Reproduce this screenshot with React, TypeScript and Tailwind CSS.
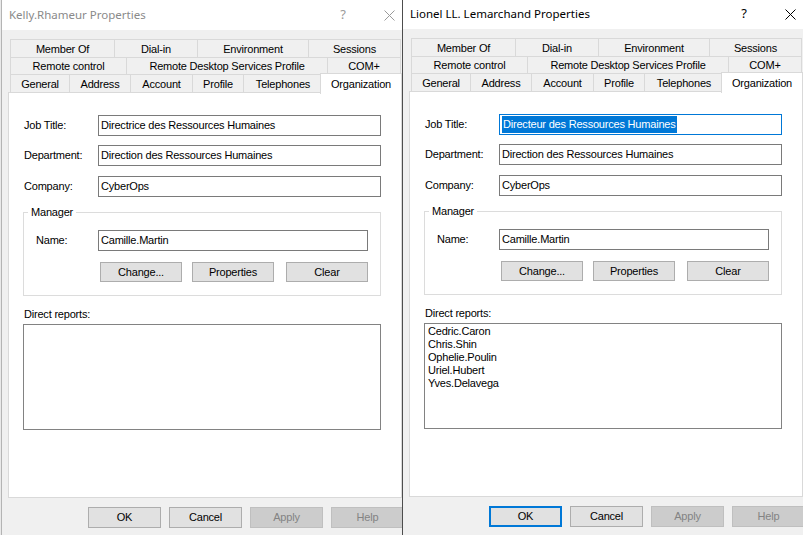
import React from 'react';

const ui = "font-['Liberation_Sans',Arial,sans-serif] text-[11px] tracking-[-0.2px] text-black";

const tabRows = [
  [
    { label: 'Member Of', w: 'w-[105px]' },
    { label: 'Dial-in', w: 'w-[84px]' },
    { label: 'Environment', w: 'w-[112px]' },
    { label: 'Sessions', w: 'w-[93px]' },
  ],
  [
    { label: 'Remote control', w: 'w-[117px]' },
    { label: 'Remote Desktop Services Profile', w: 'w-[202px]' },
    { label: 'COM+', w: 'w-[74px]' },
  ],
  [
    { label: 'General', w: 'w-[60px]' },
    { label: 'Address', w: 'w-[62px]' },
    { label: 'Account', w: 'w-[63px]' },
    { label: 'Profile', w: 'w-[52px]' },
    { label: 'Telephones', w: 'w-[80px]' },
  ],
];

function Field({ label, value, selected }: { label: string; value: string; selected?: boolean }) {
  return (
    <div className="flex items-center h-[21px]">
      <span className="w-[74px]">{label}</span>
      <div
        className={`w-[283px] h-[21px] flex items-center pl-[2px] bg-white border ${
          selected ? 'border-[#0078d7]' : 'border-[#7a7a7a]'
        }`}
      >
        {selected ? (
          <span className="bg-[#0078d7] text-white leading-[17px] px-px">{value}</span>
        ) : (
          <span>{value}</span>
        )}
      </div>
    </div>
  );
}

function Btn({ children, className = '', disabled, primary }: any) {
  return (
    <div
      className={`flex items-center justify-center ${
        disabled
          ? 'bg-[#cccccc] border border-[#bfbfbf] text-[#838383]'
          : primary
          ? 'bg-[#e1e1e1] border-2 border-[#0078d7]'
          : 'bg-[#e1e1e1] border border-[#adadad]'
      } ${className}`}
    >
      {children}
    </div>
  );
}

function Dialog({ title, active, reports }: { title: string; active?: boolean; reports: string[] }) {
  return (
    <div
      className={`w-[411px] h-[540px] bg-[#f0f0f0] border-l ${
        active ? 'border-[#4d4d4d]' : 'border-[#b4b4b4]'
      } ${ui}`}
    >
      {/* Title bar */}
      <div className="h-[30px] bg-white flex items-center pl-[7px]">
        <span
          className={`flex-1 font-['Noto_Sans',sans-serif] text-[11.5px] tracking-normal ${
            active ? 'text-black' : 'text-[#8a8a8a]'
          }`}
        >
          {title}
        </span>
        <span
          className={`w-[46px] text-center font-['Noto_Sans',sans-serif] text-[13px] tracking-normal ${
            active ? 'text-black' : 'text-[#9a9a9a]'
          }`}
        >
          ?
        </span>
        <div className="w-[46px] flex justify-center">
          <svg width="11" height="11" viewBox="0 0 11 11" className={active ? 'text-black' : 'text-[#9a9a9a]'}>
            <path d="M0.5 0.5 L10.5 10.5 M10.5 0.5 L0.5 10.5" stroke="currentColor" strokeWidth="1" fill="none" />
          </svg>
        </div>
      </div>

      <div className="pl-[6px]">
        {/* Tabs */}
        <div className="ml-[2px] mt-[9px]">
          <div className="flex h-[19px]">
            {tabRows[0].map((t) => (
              <div key={t.label} className={`${t.w} flex items-center justify-center pt-px border border-[#d9d9d9] -ml-px first:ml-0`}>
                {t.label}
              </div>
            ))}
          </div>
          <div className="flex h-[18px] -mt-px">
            {tabRows[1].map((t) => (
              <div key={t.label} className={`${t.w} flex items-center justify-center pt-px border border-[#d9d9d9] -ml-px first:ml-0`}>
                {t.label}
              </div>
            ))}
          </div>
          <div className="flex items-end h-[19px] -mt-px">
            {tabRows[2].map((t) => (
              <div key={t.label} className={`${t.w} h-[19px] flex items-center justify-center pt-[2px] border border-[#d9d9d9] -ml-px first:ml-0`}>
                {t.label}
              </div>
            ))}
            <div className="w-[82px] h-[21px] -ml-[3px] -mb-px relative z-10 flex items-center justify-center bg-white border border-b-0 border-[#d9d9d9]">
              Organization
            </div>
          </div>
        </div>

        {/* Page */}
        <div className="w-[394px] h-[406px] -mt-px bg-white border border-[#d9d9d9] pl-[15px] pt-[22px]">
          <Field label="Job Title:" value={active ? 'Directeur des Ressources Humaines' : 'Directrice des Ressources Humaines'} selected={active} />
          <div className="mt-[9px]">
            <Field label="Department:" value="Direction des Ressources Humaines" />
          </div>
          <div className="mt-[10px]">
            <Field label="Company:" value="CyberOps" />
          </div>

          <fieldset className="mt-[9px] -ml-px w-[358px] border border-[#dcdcdc] pl-[12px] pt-[11px] pb-[13px]">
            <legend className="-ml-[8px] px-[3px] leading-[13px]">Manager</legend>
            <div className="flex items-center h-[21px]">
              <span className="w-[62px]">Name:</span>
              <div className="w-[270px] h-[21px] flex items-center pl-[2px] border border-[#7a7a7a]">Camille.Martin</div>
            </div>
            <div className="flex mt-[11px] ml-[64px]">
              <Btn className="w-[82px] h-[20px]">Change...</Btn>
              <Btn className="w-[82px] h-[20px] ml-[10px]">Properties</Btn>
              <Btn className="w-[82px] h-[20px] ml-[12px]">Clear</Btn>
            </div>
          </fieldset>

          <div className="mt-[12px] leading-[13px]">Direct reports:</div>
          <div className="mt-[3px] -ml-px w-[358px] h-[106px] border border-[#828282] pl-[3px] pt-[1px]">
            {reports.map((r) => (
              <div key={r} className="leading-[13px]">
                {r}
              </div>
            ))}
          </div>
        </div>

        {/* Dialog buttons */}
        <div className="flex gap-[8px] mt-[9px] ml-[80px]">
          <Btn className="w-[73px] h-[21px]" primary={active}>OK</Btn>
          <Btn className="w-[73px] h-[21px]">Cancel</Btn>
          <Btn className="w-[73px] h-[21px]" disabled>Apply</Btn>
          <Btn className="w-[73px] h-[21px]" disabled>Help</Btn>
        </div>
      </div>
    </div>
  );
}

export default function App() {
  return (
    <div className="w-[803px] h-[535px] overflow-hidden flex bg-[#e9e9e9]">
      <div className="w-[402px] shrink-0 overflow-hidden pl-px">
        <Dialog title="Kelly.Rhameur Properties" reports={[]} />
      </div>
      <div className="flex-1 overflow-hidden -mt-px">
        <Dialog
          title="Lionel LL. Lemarchand Properties"
          active
          reports={['Cedric.Caron', 'Chris.Shin', 'Ophelie.Poulin', 'Uriel.Hubert', 'Yves.Delavega']}
        />
      </div>
    </div>
  );
}
